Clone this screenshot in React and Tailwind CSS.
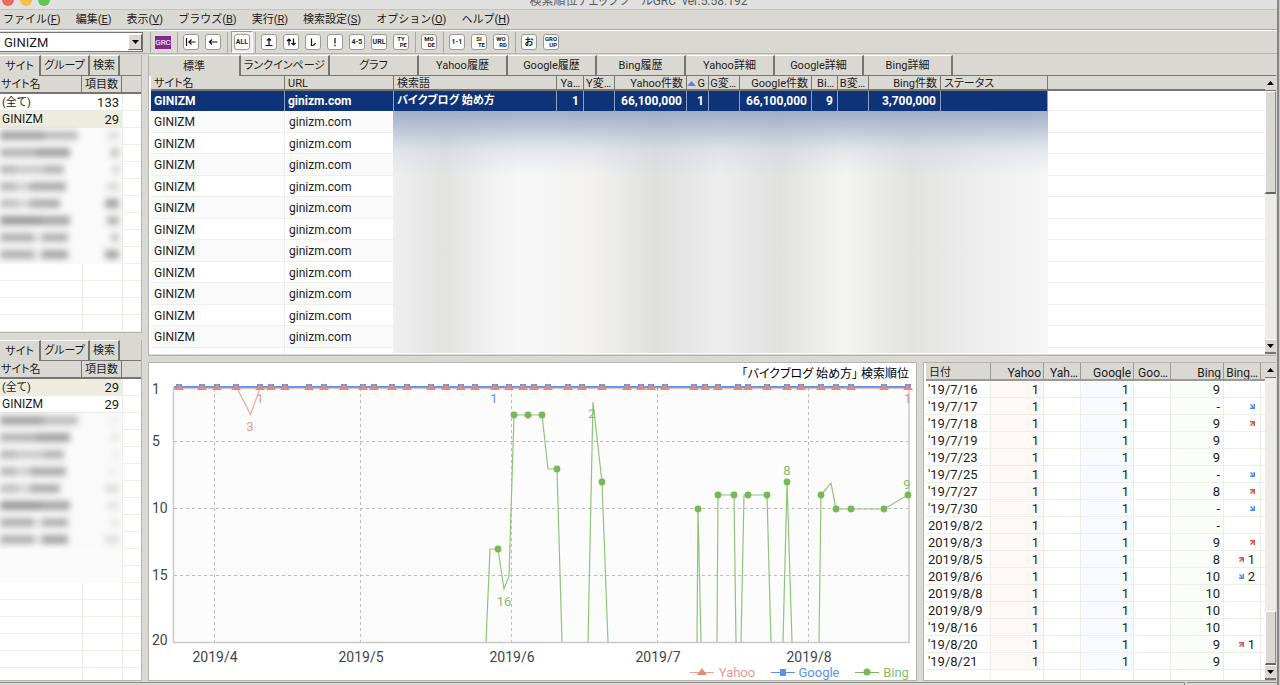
import { Fragment } from "react";
import clsx from "clsx";

const menus = [
  ["ファイル", "F"],
  ["編集", "E"],
  ["表示", "V"],
  ["ブラウズ", "B"],
  ["実行", "R"],
  ["検索設定", "S"],
  ["オプション", "O"],
  ["ヘルプ", "H"],
];

const mainTabs = [
  "標準",
  "ランクインページ",
  "グラフ",
  "Yahoo履歴",
  "Google履歴",
  "Bing履歴",
  "Yahoo詳細",
  "Google詳細",
  "Bing詳細",
];

const mainCols = [
  { name: "サイト名", w: "w-[134px]" },
  { name: "URL", w: "w-[109px]" },
  { name: "検索語", w: "w-[163px]" },
  { name: "Ya…", w: "w-[27px]", right: true },
  { name: "Y変…", w: "w-[31px]", right: true },
  { name: "Yahoo件数", w: "w-[72px]", right: true },
  { name: "G", w: "w-[22px]", right: true, sorted: true },
  { name: "G変…", w: "w-[31px]", right: true },
  { name: "Google件数", w: "w-[72px]", right: true },
  { name: "Bi…", w: "w-[26px]", right: true },
  { name: "B変…", w: "w-[31px]", right: true },
  { name: "Bing件数", w: "w-[72px]", right: true },
  { name: "ステータス", w: "w-[107px]" },
];

const selectedRow = [
  "GINIZM",
  "ginizm.com",
  "バイクブログ 始め方",
  "1",
  "",
  "66,100,000",
  "1",
  "",
  "66,100,000",
  "9",
  "",
  "3,700,000",
  "",
];

// widths and greys of the masked site names
const masked = [
  { bars: [[44, "#a2a2a2"], [34, "#bcbcbc"]], count: [12, "#e0e0e0"] },
  { bars: [[36, "#b4b4b4"], [34, "#a0a0a0"]], count: [8, "#c0c0c0"] },
  { bars: [[16, "#b8b8b8"], [28, "#cacaca"], [20, "#b4b4b4"]], count: [6, "#d0d0d0"] },
  { bars: [[16, "#b8b8b8"], [14, "#d0d0d0"], [36, "#ababab"]], count: [12, "#dadada"] },
  { bars: [[18, "#c0c0c0"], [12, "#d6d6d6"], [30, "#acacac"]], count: [14, "#a0a0a0"] },
  { bars: [[42, "#979797"], [28, "#a4a4a4"]], count: [12, "#b4b4b4"] },
  { bars: [[34, "#b0b0b0"], [8, "#e4e4e4"], [26, "#b2b2b2"]], count: [8, "#c4c4c4"] },
  { bars: [[34, "#b0b0b0"], [8, "#e4e4e4"], [26, "#a4a4a4"]], count: [14, "#a4a4a4"] },
];

const history = [
  ["'19/7/16", "9", "", ""],
  ["'19/7/17", "-", "down", ""],
  ["'19/7/18", "9", "up", ""],
  ["'19/7/19", "9", "", ""],
  ["'19/7/23", "9", "", ""],
  ["'19/7/25", "-", "down", ""],
  ["'19/7/27", "8", "up", ""],
  ["'19/7/30", "-", "down", ""],
  ["2019/8/2", "-", "", ""],
  ["2019/8/3", "9", "up", ""],
  ["2019/8/5", "8", "up", "1"],
  ["2019/8/6", "10", "down", "2"],
  ["2019/8/8", "10", "", ""],
  ["2019/8/9", "10", "", ""],
  ["'19/8/16", "10", "", ""],
  ["'19/8/20", "9", "up", "1"],
  ["'19/8/21", "9", "", ""],
];

function Tab({ children, active, className }) {
  return (
    <button
      role="tab"
      aria-selected={!!active}
      className={clsx(
        "h-full shrink-0 overflow-hidden whitespace-nowrap border-t border-t-white border-r-2 border-r-[#77756f] pt-px text-center text-[11px] leading-[18px]",
        !active && "border-b border-b-[#77756f]",
        className
      )}
    >
      {children}
    </button>
  );
}

function ScrollBar({ before, thumb, after }) {
  return (
    <div className="flex w-[11px] shrink-0 flex-col bg-[#ecebe7]">
      <button
        aria-label="上へ"
        className="flex h-[15px] items-center justify-center border-b border-[#77756f] bg-[#dad8d2]"
      >
        <svg width="7" height="4" viewBox="0 0 7 4">
          <path d="M0 4 3.500 0 7 4z" fill="#000" />
        </svg>
      </button>
      <div className={before} />
      <div
        className={clsx(
          "border border-t-white border-l-white border-b-2 border-b-[#66645f] border-r-[#8f8d87] bg-[#dad8d2]",
          thumb
        )}
      />
      <div className={after} />
      <button
        aria-label="下へ"
        className="flex h-[15px] items-center justify-center border-b-2 border-t border-t-white border-b-[#77756f] bg-[#dad8d2]"
      >
        <svg width="7" height="4" viewBox="0 0 7 4">
          <path d="M0 0h7L3.500 4z" fill="#000" />
        </svg>
      </button>
    </div>
  );
}

function MaskedBars({ bars }) {
  return (
    <span className="flex items-center blur-[3px]">
      {bars.map(([width, color], i) => (
        <span key={i} className="h-[9px]" style={{ width, background: color }} />
      ))}
    </span>
  );
}

function SitePanel({ total, selected, faint, maskedBlank }) {
  const rows = [
    ["(全て)", total],
    ["GINIZM", "29"],
  ];
  return (
    <section className="flex min-h-0 flex-col border-r border-b border-[#b5b3ad]">
      <div role="tablist" className="flex h-[21px] shrink-0 bg-[#dad8d2]">
        <Tab active className="w-[41px]">
          サイト
        </Tab>
        <Tab className="w-[49px]">グループ</Tab>
        <Tab className="w-[30px]">検索</Tab>
        <div className="flex-1 border-b border-[#77756f]" />
      </div>
      <div className="min-h-0 flex-1 overflow-hidden bg-white">
        <table className="w-full table-fixed border-separate border-spacing-0">
          <colgroup>
            <col className="w-[82px]" />
            <col className="w-[40px]" />
            <col />
          </colgroup>
          <thead>
            <tr className="bg-[#dad8d2] text-[11px] leading-[14px]">
              <th className="border-b-2 border-r border-[#77756f] pt-[2px] pl-px text-left font-normal">
                サイト名
              </th>
              <th className="border-b-2 border-r border-[#77756f] pt-[2px] pr-[3px] text-right font-normal">
                項目数
              </th>
              <th className="border-b-2 border-[#77756f]" />
            </tr>
          </thead>
          <tbody>
            {rows.map(([name, count], i) => (
              <tr key={name} className="leading-[15px]">
                <td
                  className={clsx(
                    "border-b border-[#eeede6] pt-px pl-[2px]",
                    i === 0 ? "text-[11px]" : "text-[12px]",
                    selected === i && "bg-[#eeecdf]"
                  )}
                >
                  {name}
                </td>
                <td
                  className={clsx(
                    "border-b border-[#eeede6] pt-px pr-[3px] text-right text-[13px]",
                    selected === i && "bg-[#eeecdf]"
                  )}
                >
                  {count}
                </td>
                <td className="border-b border-l border-[#eeede6]" />
              </tr>
            ))}
            {masked.map((m, i) => (
              <tr key={i} className="h-[17px] align-top">
                <td className="bg-[#fafafa] pt-[3px]">
                  <MaskedBars bars={m.bars} />
                </td>
                <td className="bg-[#fafafa] pt-[3px] pr-[3px]">
                  <span className={clsx("flex justify-end", faint && "opacity-30")}>
                    <MaskedBars bars={[m.count]} />
                  </span>
                </td>
                <td className="border-b border-l border-[#eeede6]" />
              </tr>
            ))}
            {Array.from({ length: 9 }, (_, i) => (
              <tr key={i} className="h-[17px]">
                {i < maskedBlank ? (
                  <td colSpan={2} className="bg-[#fbfbfb]" />
                ) : (
                  <>
                    <td className="border-b border-[#eeede6]" />
                    <td className="border-b border-l border-[#eeede6]" />
                  </>
                )}
                <td className="border-b border-l border-[#eeede6]" />
              </tr>
            ))}
          </tbody>
        </table>
      </div>
    </section>
  );
}

function Sep({ className = "ml-[6px] mr-[5px]" }) {
  return (
    <div className={clsx("h-[21px] w-px shrink-0 border-l border-[#a9a7a1]", className)} />
  );
}

function ToolButton({ label, children }) {
  return (
    <button
      aria-label={label}
      className="flex size-4 shrink-0 flex-col items-center justify-center rounded-[3px] border border-[#9b9993] bg-white text-[7px] leading-[6px] font-bold"
    >
      {children}
    </button>
  );
}

function Glyph({ d }) {
  return (
    <svg width="12" height="12" viewBox="0 0 12 12" fill="none" stroke="#111" strokeWidth="1.200">
      <path d={d} />
    </svg>
  );
}

// two-line caption, second line pushed to the right
function Stack({ a, b }) {
  return (
    <span className="flex w-3 flex-col text-[6px] leading-[6px]">
      <span>{a}</span>
      <span className="text-right">{b}</span>
    </span>
  );
}

function Toolbar() {
  return (
    <div className="flex h-6 shrink-0 items-center border-t border-b border-t-white border-b-[#b5b3ad]">
      <div className="relative w-[143px] shrink-0">
        <select
          aria-label="サイト"
          className="block h-5 w-full appearance-none border border-[#77756f] border-l-0 bg-white pt-px pl-1 text-[13px] leading-[18px]"
        >
          <option>GINIZM</option>
        </select>
        <span className="pointer-events-none absolute top-[2px] right-[1px] flex h-4 w-[14px] items-center justify-center border border-t-white border-l-white border-r-[#66645f] border-b-[#66645f] bg-[#dad8d2]">
          <svg width="7" height="4" viewBox="0 0 7 4">
            <path d="M0 0h7L3.500 4z" fill="#000" />
          </svg>
        </span>
      </div>
      <Sep className="ml-[7px] mr-1" />
      <button className="h-[13px] w-4 shrink-0 bg-[#82298f] text-[8px] leading-[13px] text-white">
        GRC
      </button>
      <Sep />
      <div className="flex gap-[6px]">
        <ToolButton label="先頭">
          <Glyph d="M1.500 2v8M10.500 6H4M6.500 3.500 4 6l2.500 2.500" />
        </ToolButton>
        <ToolButton label="戻る">
          <Glyph d="M10.500 6h-8M5 3.500 2.500 6 5 8.500" />
        </ToolButton>
      </div>
      <Sep className="ml-[6px] mr-[3px]" />
      <div className="flex h-[22px] w-[22px] shrink-0 items-center justify-center border border-[#9b9993] border-r-white border-b-white bg-[#efeeeb]">
        <ToolButton>ALL</ToolButton>
      </div>
      <Sep className="ml-[2px] mr-[5px]" />
      <div className="flex gap-[6px]">
        <ToolButton label="上位">
          <Glyph d="M6 9V2.500M4 4.500l2-2 2 2M2.500 9.500h7" />
        </ToolButton>
        <ToolButton label="変動">
          <Glyph d="M4 9.500V3M2 5l2-2 2 2M8.500 2.500V9M6.500 7l2 2 2-2" />
        </ToolButton>
        <ToolButton label="下落">
          <Glyph d="M4.500 2.500v7h1q2 0 3-2.500" />
        </ToolButton>
        <ToolButton label="注意">
          <Glyph d="M6 2v5.500M6 8.800v1.400" />
        </ToolButton>
        <ToolButton>4-5</ToolButton>
        <ToolButton>URL</ToolButton>
        <ToolButton>
          <Stack a="TY" b="PE" />
        </ToolButton>
      </div>
      <Sep />
      <ToolButton>
        <Stack a="MO" b="DE" />
      </ToolButton>
      <Sep />
      <div className="flex gap-[6px]">
        <ToolButton>1-1</ToolButton>
        <ToolButton>
          <Stack a="SI" b="TE" />
        </ToolButton>
        <ToolButton>
          <Stack a="WO" b="RD" />
        </ToolButton>
      </div>
      <Sep />
      <div className="flex gap-[6px]">
        <ToolButton>
          <span className="text-[9px] leading-[12px]">お</span>
        </ToolButton>
        <ToolButton>
          <Stack a="GRO" b="UP" />
        </ToolButton>
      </div>
    </div>
  );
}

function RankTable() {
  return (
    <section className="flex min-h-0 flex-col border-l border-b border-[#b5b3ad] pb-px">
      <div role="tablist" className="flex h-[21px] shrink-0">
        {mainTabs.map((t, i) => (
          <Tab key={t} active={i === 0} className={i === 0 ? "w-[92px]" : "w-[89px]"}>
            {t}
          </Tab>
        ))}
        <div className="flex-1 border-b border-[#77756f]" />
      </div>
      <div className="flex min-h-0 flex-1">
        <div className="relative min-w-0 flex-1 overflow-hidden bg-white pl-[2px]">
          <table className="w-full table-fixed border-separate border-spacing-0">
            <colgroup>
              {mainCols.map((c) => (
                <col key={c.name} className={c.w} />
              ))}
              <col />
            </colgroup>
            <thead>
              <tr className="bg-[#dad8d2] text-[11px] leading-[11px]">
                {mainCols.map((c) => (
                  <th
                    key={c.name}
                    className={clsx(
                      "overflow-hidden whitespace-nowrap border-b-2 border-r border-[#77756f] pt-[2px] font-normal",
                      c.right ? "pr-[3px] text-right" : "pl-[3px] text-left"
                    )}
                  >
                    {c.sorted ? (
                      <span className="flex items-center justify-between">
                        <svg width="9" height="5" viewBox="0 0 9 5">
                          <path d="M0 5 4.500 0 9 5z" fill="#6a78f0" />
                        </svg>
                        {c.name}
                      </span>
                    ) : (
                      c.name
                    )}
                  </th>
                ))}
                <th className="border-b-2 border-[#77756f]" />
              </tr>
            </thead>
            <tbody>
              <tr className="text-[12px] leading-5 font-bold text-white">
                {selectedRow.map((v, i) => (
                  <td
                    key={i}
                    className={clsx(
                      "overflow-hidden whitespace-nowrap border-r border-[#8f9dbf] bg-[#0f3379]",
                      i === 2 && "text-[11px]",
                      mainCols[i].right ? "pr-1 text-right" : "pl-[3px]"
                    )}
                  >
                    {v}
                  </td>
                ))}
                <td className="border-b border-[#eeeeec]" />
              </tr>
              {Array.from({ length: 12 }, (_, i) => (
                <tr
                  key={i}
                  className={clsx("text-[12px]", i % 2 ? "leading-[18px]" : "leading-[19px]")}
                >
                  <td
                    className={clsx(
                      "border-b border-r border-[#eeeeec] pt-[2px] pl-[3px]",
                      i % 2 === 0 && "bg-[#fafafa]"
                    )}
                  >
                    GINIZM
                  </td>
                  <td
                    className={clsx(
                      "border-b border-[#eeeeec] pt-[2px] pl-1",
                      i % 2 === 0 && "bg-[#fafafa]"
                    )}
                  >
                    ginizm.com
                  </td>
                  <td colSpan={11} />
                  <td className="border-b border-[#eeeeec]" />
                </tr>
              ))}
            </tbody>
          </table>
          {/* masked keyword data */}
          <div className="absolute top-[35px] bottom-px left-[244px] w-[655px] bg-[linear-gradient(to_right,#efefef_0%,#e2e2e1_8%,#f1f1f1_15%,#f7f7f7_20%,#f3f2f1_30%,#e9e9e8_35%,#dfdfde_40%,#e4e4e4_44%,#ededee_50%,#e0e0df_59%,#f4f4f2_69%,#e2e2e1_79%,#ededed_89%,#f6f6f6_100%)]">
            <div className="h-16 bg-[linear-gradient(to_bottom,#96a5c3e0_0%,#a9b5cdc0_25%,#ccd3e070_60%,#e8eaee00_100%)]" />
          </div>
        </div>
        <ScrollBar before="h-0" thumb="h-[103px]" after="flex-1" />
      </div>
    </section>
  );
}

const rankX = [
  179, 202, 217, 236, 260, 271, 285, 309, 324, 344, 363, 374, 392, 407, 431, 446, 461, 475, 495,
  509, 523, 534, 548, 568, 582, 602, 627, 641, 651, 665, 694, 705, 718, 738, 748, 767, 787, 801,
  821, 836, 851, 884, 908,
];

const bingLines = [
  "486,642 490,549 498,549 504,589 509,576 514,415 528,415 542,415 548,469 557,469 562,642",
  "588,642 593,402 602,482 608,642",
  "697,642 698,509 701,642",
  "717,642 718,495 734,495 736,642",
  "741,642 744,495 767,495 771,642",
  "783,642 787,482 792,642",
  "819,642 821,495 831,483 836,509 884,509 908,495",
];

const bingDots = [
  [498, 549],
  [514, 415],
  [528, 415],
  [542, 415],
  [557, 469],
  [602, 482],
  [698, 509],
  [718, 495],
  [734, 495],
  [748, 495],
  [767, 495],
  [787, 482],
  [821, 495],
  [836, 509],
  [851, 509],
  [884, 509],
  [908, 495],
];

function RankChart() {
  return (
    <section className="min-h-0 min-w-0 flex-1 border border-[#b5b3ad] bg-white">
      <svg className="block h-full w-full" viewBox="149 363 767 317" fontSize="14">
        <text x="909" y="378" textAnchor="end" fontSize="12" fill="#000">
          「バイクブログ 始め方」 検索順位
        </text>
        <path d="M173.500 387v255.500h735.500V387" fill="#fcfcfc" stroke="#c9c9c9" strokeWidth="1.500" />
        <path
          d="M174 441.500h735M174 508.500h735M174 575.500h735M214.500 388v254M360.500 388v254M511.500 388v254M657.500 388v254M808.500 388v254"
          stroke="#bcbcbc"
          strokeDasharray="3 3"
        />
        <g fill="#444">
          <text x="152" y="394">1</text>
          <text x="152" y="446">5</text>
          <text x="152" y="513">10</text>
          <text x="152" y="580">15</text>
          <text x="152" y="645">20</text>
          <g textAnchor="middle">
            <text x="215" y="662">2019/4</text>
            <text x="361" y="662">2019/5</text>
            <text x="512" y="662">2019/6</text>
            <text x="658" y="662">2019/7</text>
            <text x="809" y="662">2019/8</text>
          </g>
        </g>
        <g fill="none" stroke="#8fc57b" strokeWidth="1.200">
          {bingLines.map((p) => (
            <polyline key={p} points={p} />
          ))}
        </g>
        <g fill="#78b65a">
          {bingDots.map(([x, y]) => (
            <circle key={x} cx={x} cy={y} r="3.400" />
          ))}
        </g>
        <path d="M174 386.500h735" stroke="#5b93ee" strokeWidth="1.200" />
        <path d="M174 387.800h735" stroke="#de7f72" strokeWidth="1.400" />
        <path d="M237 388l13.500 26.500L260 388" fill="none" stroke="#eaa79d" strokeWidth="1.200" />
        {rankX.map((x) => (
          <Fragment key={x}>
            <rect x={x - 3} y="384" width="6" height="4" fill="#5b93ee" />
            <path d={`M${x} 383.500l5 6.500h-10z`} fill="#e08a7c" />
          </Fragment>
        ))}
        <g fontSize="13" textAnchor="middle">
          <text x="260" y="403" fill="#e59a8f">1</text>
          <text x="250" y="431" fill="#e59a8f">3</text>
          <text x="494" y="403" fill="#5b93ee">1</text>
          <text x="908" y="403" fill="#e08a7c">1</text>
          <g fill="#82bd68">
            <text x="592" y="418">2</text>
            <text x="504" y="606">16</text>
            <text x="787" y="475">8</text>
            <text x="907" y="489">9</text>
          </g>
          <path d="M690 672.500h24" stroke="#e9a297" />
          <path d="M702 668l5 7h-10z" fill="#e08a7c" />
          <text x="737" y="677" fill="#e59a8f">Yahoo</text>
          <path d="M771 672.500h24" stroke="#5b93ee" />
          <rect x="780" y="669" width="6" height="7" fill="#5b93ee" />
          <text x="819" y="677" fill="#5b93ee">Google</text>
          <path d="M855 672.500h24" stroke="#78b65a" />
          <circle cx="867" cy="672" r="3.500" fill="#78b65a" />
          <text x="896" y="677" fill="#82bd68">Bing</text>
        </g>
      </svg>
    </section>
  );
}

function Trend({ dir }) {
  const up = dir === "up";
  return (
    <svg
      className="inline-block"
      width="5"
      height="5"
      viewBox="0 0 5 5"
      fill="none"
      stroke={up ? "#dd5a4c" : "#4a8be8"}
      strokeWidth="1.500"
    >
      <path d={up ? "M0 .75h4.250V5M4.250 .75 .5 4.500" : "M4.250 0v4.250H0M4.250 4.250 .5 .5"} />
    </svg>
  );
}

function HistoryTable() {
  const head = ["日付", "Yahoo", "Yah…", "Google", "Goo…", "Bing", "Bing…"];
  const cell = "border-b border-r border-[#eeede6] pt-px";
  return (
    <section className="flex w-[353px] shrink-0 border-l border-t border-b border-[#b5b3ad] bg-white">
      <div className="min-w-0 flex-1 overflow-hidden pl-[2px]">
        <table className="w-full table-fixed border-separate border-spacing-0">
          <colgroup>
            <col className="w-[65px]" />
            <col className="w-[53px]" />
            <col className="w-[37px]" />
            <col className="w-[53px]" />
            <col className="w-[37px]" />
            <col className="w-[53px]" />
            <col className="w-[37px]" />
            <col />
          </colgroup>
          <thead>
            <tr className="bg-[#dad8d2] text-[12px] leading-[12px]">
              {head.map((h, i) => (
                <th
                  key={h}
                  className={clsx(
                    "overflow-hidden whitespace-nowrap border-b-2 border-r border-[#9b9993] pt-1 font-normal",
                    i === 0 ? "pl-[3px] text-left text-[11px]" : "pr-[2px] text-right"
                  )}
                >
                  {h}
                </th>
              ))}
              <th className="border-b-2 border-[#9b9993]" />
            </tr>
          </thead>
          <tbody>
            {history.map(([date, bing, dir, diff]) => (
              <tr key={date} className="text-right text-[13px] leading-[15px]">
                <td className={clsx(cell, "pl-[2px] text-left")}>{date}</td>
                <td className={clsx(cell, "bg-[#fef9f8] pr-[4px]")}>1</td>
                <td className={cell} />
                <td className={clsx(cell, "bg-[#f7fafe] pr-[4px]")}>1</td>
                <td className={cell} />
                <td className={clsx(cell, "bg-[#fbfdfb] pr-[3px]")}>{bing}</td>
                <td className={cell}>
                  <span className="flex h-[15px] items-center justify-end gap-1 pr-[5px]">
                    {dir && <Trend dir={dir} />}
                    {diff}
                  </span>
                </td>
                <td className="border-b border-[#eeede6]" />
              </tr>
            ))}
            <tr className="h-[17px]">
              {head.map((h) => (
                <td key={h} className="border-r border-[#eeede6]" />
              ))}
              <td />
            </tr>
          </tbody>
        </table>
      </div>
      <ScrollBar before="flex-1" thumb="h-[54px]" after="h-0" />
    </section>
  );
}

export default function App() {
  return (
    <div
      lang="ja"
      className="flex h-screen flex-col overflow-hidden bg-[#c9c9c9] pr-px font-['Roboto','Noto_Sans_CJK_JP',sans-serif] text-[#1c1c1c] [font-feature-settings:'palt']"
    >
      <div className="flex min-h-0 flex-1 flex-col border-r-2 border-[#868686] bg-[#dad8d2]">
        <header className="relative flex h-[10px] shrink-0 items-end justify-center border-b border-[#c4c2bf] bg-[#e0e0e0]">
          <div className="absolute bottom-[3px] left-[2px] flex gap-[6px]">
            <span className="size-3 rounded-full bg-[#ee6a5f]" />
            <span className="size-3 rounded-full bg-[#f5bd4f]" />
            <span className="size-3 rounded-full bg-[#61c454]" />
          </div>
          <h1 className="text-[12px] leading-[16px] whitespace-pre text-[#5c5c5c]">
            検索順位チェックツールGRC  ver.5.58.192
          </h1>
        </header>
        <nav className="flex h-5 shrink-0 items-center gap-[15px] border-b border-[#a9a7a1] pt-px pl-[3px] [font-feature-settings:normal]">
          {menus.map(([name, key]) => (
            <button key={key} className="text-[11px] leading-[16px] whitespace-nowrap">
              {name}(<u>{key}</u>)
            </button>
          ))}
        </nav>
        <Toolbar />
        <main className="flex min-h-0 flex-1 gap-[6px] pt-px pr-px">
          <aside className="grid w-[142px] shrink-0 grid-rows-[278fr_341fr] gap-[7px]">
            <SitePanel total="133" selected={1} maskedBlank={0} />
            <SitePanel total="29" selected={0} faint maskedBlank={2} />
          </aside>
          <div className="grid min-w-0 flex-1 grid-rows-[301fr_319fr] gap-[6px]">
            <RankTable />
            <div className="flex min-h-0 gap-[6px]">
              <RankChart />
              <HistoryTable />
            </div>
          </div>
        </main>
        <footer className="flex h-1 shrink-0 items-end">
          <div className="h-[3px] flex-1 border-t border-r border-[#8f8d87]" />
          <div className="ml-[2px] h-[3px] w-[90px] border-t border-[#8f8d87]" />
        </footer>
      </div>
    </div>
  );
}
